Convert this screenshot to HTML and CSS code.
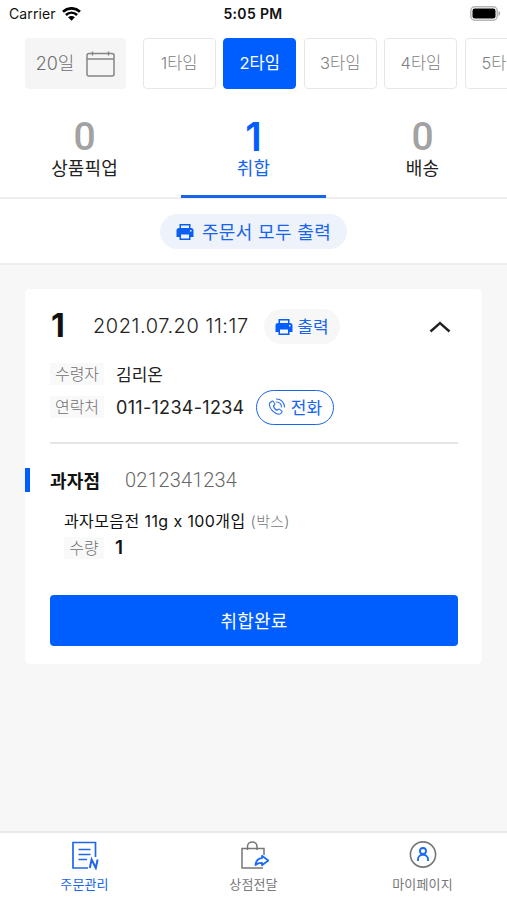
FILE: index.html
```html
<!DOCTYPE html>
<html lang="ko">
<head>
<meta charset="utf-8">
<meta name="viewport" content="width=device-width">
<title>주문관리</title>
<link rel="stylesheet" href="styles.css">
</head>
<body>
<div class="app">
  <header class="status">
    <div class="carrier"><span>Carrier</span>
      <svg width="19" height="14" viewBox="0 0 19 14" fill="none" stroke="#000" stroke-width="2.7"><path d="M1 4.700c5-4.500 12-4.500 17 0M3.900 8c3.300-3 7.900-3 11.200 0"/><path d="M6.100 10.200 9.500 13.800l3.400-3.600c-1.900-1.700-4.900-1.700-6.800 0z" fill="#000" stroke="none"/></svg>
    </div>
    <div class="clock">5:05 PM</div>
    <svg class="battery" width="31" height="15" viewBox="0 0 31 15"><rect x=".8" y=".8" width="26.400" height="13.400" rx="4" fill="#fff" stroke="#b5b5b5" stroke-width="1.500"/><rect x="2.500" y="2.500" width="23" height="10" rx="2.300"/><path d="M28.500 5v5c2.300-1 2.300-4 0-5z" fill="#aaa"/></svg>
  </header>

  <div class="times">
    <button class="date"><span>20일</span>
      <svg width="29" height="26" viewBox="0 0 29 26" fill="none" stroke="#858585" stroke-width="1.500"><rect x="1" y="2.500" width="27" height="22.500" rx="2"/><path d="M1 8h27M6.500 .5v4M22.500 .5v4"/></svg>
    </button>
    <button class="time"><span>1타임</span></button>
    <button class="time on"><span>2타임</span></button>
    <button class="time"><span>3타임</span></button>
    <button class="time"><span>4타임</span></button>
    <button class="time"><span>5타임</span></button>
  </div>

  <nav class="steps">
    <div class="step"><b>0</b><span>상품픽업</span></div>
    <div class="step on"><b>1</b><span>취합</span></div>
    <div class="step"><b>0</b><span>배송</span></div>
  </nav>

  <div class="printbar">
    <button class="printall">
      <svg class="printer" width="18" height="18" viewBox="0 0 18 18"><path fill="#0a5ff0" fill-rule="evenodd" d="M3.500 1h11v4h-11zM5 2.500v2.500h8V2.500zM3 5h12q2.500 0 2.500 2.500V14h-3v3h-11v-3h-3V7.500Q.5 5 3 5zM5 11.500v4h8v-4zM14 7v1.500h1.500V7z"/></svg>
      <span>주문서 모두 출력</span>
    </button>
  </div>

  <main class="content">
    <section class="card">
      <div class="head">
        <b class="no">1</b>
        <span class="when">2021.07.20 11:17</span>
        <button class="print">
          <svg class="printer" width="18" height="18" viewBox="0 0 18 18"><path fill="#005eff" fill-rule="evenodd" d="M3.500 1h11v4h-11zM5 2.500v2.500h8V2.500zM3 5h12q2.500 0 2.500 2.500V14h-3v3h-11v-3h-3V7.500Q.5 5 3 5zM5 11.500v4h8v-4zM14 7v1.500h1.500V7z"/></svg>
          <span>출력</span>
        </button>
        <svg class="chevron" width="22" height="13" viewBox="0 0 22 13" fill="none" stroke="#222" stroke-width="2.400"><path d="M1.500 11.500 11 3l9.500 8.500"/></svg>
      </div>
      <div class="row person"><span class="tag"><span>수령자</span></span><span class="value name">김리온</span></div>
      <div class="row contact"><span class="tag"><span>연락처</span></span><span class="value phone">011-1234-1234</span>
        <button class="call">
          <svg width="18" height="18" viewBox="0 0 18 18" fill="none" stroke="#2a6eea" stroke-width="1.100" stroke-linecap="round" stroke-linejoin="round"><path d="M2.300 4.500 4 3.200q.8-.4 1.300.3l1.500 2.200q.4.700-.3 1.300l-1 .8c.3 2 1.800 3.800 3.700 4.400l1.200-.9q.7-.5 1.300 0l2 1.600q.7.600.1 1.400l-1.200 1.400q-.6.600-1.500.5C6 15.700 1.800 11.200 1.300 6.500q0-1.200 1-2z"/><path d="M8.500 1c4.500 0 8 3.500 8 8M8.500 4c3 0 5 2 5 5"/></svg>
          <span>전화</span>
        </button>
      </div>
      <div class="shop"><b>과자점</b><span>0212341234</span></div>
      <div class="item"><span class="product">과자모음전 11g x 100개입</span><span class="unit">(박스)</span></div>
      <div class="qty"><span class="tag"><span>수량</span></span><b>1</b></div>
      <button class="done"><span>취합완료</span></button>
    </section>
  </main>

  <nav class="bottom">
    <a class="on">
      <svg width="30" height="30" viewBox="0 0 30 30" fill="none" stroke="#1e67e8" stroke-width="1.700"><path d="M18 28H3V2.500H25.500V17M8.500 9.500H20.500M8.500 14.500H20.500M8.500 19.500h8.500"/><path d="m19.800 28 1.800-8.500 4.200 8.500 1.800-8.500" stroke-width="2"/></svg>
      <span>주문관리</span>
    </a>
    <a>
      <svg width="30" height="30" viewBox="0 0 30 30" fill="none" stroke="#777" stroke-width="1.500"><path d="M25 15V8.500H3V28h21M8.500 10V6.500c0-6 9.500-6 9.500 0V10"/><path stroke="#1e6cf5" stroke-width="1.800" stroke-linejoin="round" d="M16.500 25c.5-4.500 3-6.700 6.500-6.900v-2.300l6.300 4.700-6.300 4.700v-2.400c-2.500-.1-4.500.3-6.500 2.200z"/></svg>
      <span>상점전달</span>
    </a>
    <a>
      <svg width="30" height="30" viewBox="0 0 30 30" fill="none" stroke="#777" stroke-width="1.600"><circle cx="15" cy="14.500" r="12.600"/><g stroke="#1e6cf5" stroke-width="1.900"><circle cx="15" cy="11" r="3"/><path d="M10 21v-1.700c0-6 10-6 10 0V21"/></g></svg>
      <span>마이페이지</span>
    </a>
  </nav>
</div>
</body>
</html>
```
FILE: styles.css
```css
* { box-sizing: border-box; }
body { margin: 0; background: #fff; }
body, button { font-family: Inter, "Noto Sans CJK KR", sans-serif; }
button { border: 0; padding: 0; margin: 0; flex: none; display: flex; align-items: center; justify-content: center; white-space: nowrap; }
button span, .tag span { padding-bottom: 2px; }
svg { display: block; flex: none; }
.app { width: 507px; height: 900px; overflow: hidden; display: flex; flex-direction: column; color: #222; white-space: nowrap; }

.status { height: 27px; flex: none; display: grid; grid-template-columns: 1fr auto 1fr; align-items: center; padding: 0 6px 0 9px; color: #111; }
.carrier { display: flex; align-items: center; gap: 6px; font-size: 14px; letter-spacing: .1px; }
.clock { font-size: 14px; font-weight: 600; letter-spacing: .35px; padding-right: 4px; }
.battery { justify-self: end; }

.times { height: 62px; flex: none; display: flex; gap: 7.600px; padding: 11px 0 0 25px; overflow: hidden; }
.date { width: 101px; height: 51px; margin-right: 9px; gap: 12px; background: #f5f5f5; border-radius: 4px; font-size: 18px; font-weight: 300; color: #707070; }
.date span { padding-bottom: 4px; }
.time { width: 73px; height: 51px; background: #fff; border: 1.500px solid #e7e7e7; border-radius: 4px; font-size: 16.500px; color: #808080; font-weight: 300; }
.time span { padding-bottom: 4px; }
.time.on { background: #005eff; border-color: #005eff; color: #fff; font-weight: 400; }

.steps { height: 110px; flex: none; display: flex; justify-content: space-between; border-bottom: 2px solid #eee; }
.step { width: 169px; display: flex; flex-direction: column; align-items: center; padding-top: 28px; }
.step b { font: 500 39px/40px Roboto, sans-serif; color: #a2a2a2; }
.step span { font-size: 18px; line-height: 24px; letter-spacing: .1px; }
.step.on { width: 145px; height: 109px; border-bottom: 3px solid #1765ea; }
.step.on b { font-family: Inter, sans-serif; font-weight: 600; color: #005eff; }
.step.on span { color: #1765ea; }

.printbar { height: 66px; flex: none; display: flex; align-items: center; justify-content: center; border-bottom: 2px solid #eee; }
.printall { width: 187px; height: 35px; margin-top: 1px; border-radius: 18px; background: #eef2fa; gap: 8px; font-size: 18px; color: #1765ea; letter-spacing: .35px; }

.content { flex: 1; background: #f7f7f7; padding: 24px 25px 0; }
.card { height: 375px; background: #fff; border-radius: 5px; padding: 18px 24px 0 25px; display: flex; flex-direction: column; }
.head { height: 39px; display: flex; align-items: center; }
.no { width: 43px; padding: 0 0 2px 1px; font-size: 32px; font-weight: 700; color: #111; }
.when { width: 171px; padding-bottom: 1px; font-size: 20px; font-weight: 300; letter-spacing: .55px; }
.print { width: 76px; height: 35px; border-radius: 18px; background: #f7f7f7; color: #1765ea; gap: 4px; font-size: 17px; }
.chevron { margin-left: auto; margin-right: 7px; }
.row { display: flex; align-items: center; }
.person { height: 30px; margin-top: 13px; }
.contact { height: 36px; }
.tag { width: 54px; height: 22px; display: flex; align-items: center; justify-content: center; background: #f9f9f9; color: #707070; font-size: 16px; font-weight: 300; }
.value { margin-left: 12px; font-size: 17px; }
.name { padding-bottom: 2px; }
.phone { width: 140px; font-size: 18px; letter-spacing: .3px; }
.call { width: 78px; height: 35px; border: 1.700px solid #1765ea; border-radius: 18px; background: #fff; color: #1765ea; font-size: 17px; gap: 5px; }
.shop { height: 76px; margin: 17px 0 0 -25px; position: relative; display: flex; align-items: center; padding-left: 25px; }
.shop::before { content: ""; position: absolute; left: 25px; right: 0; top: 0; height: 2px; background: #e6e6e6; }
.shop::after { content: ""; position: absolute; left: 0; top: 26px; width: 5px; height: 24px; background: #005eff; }
.shop b { width: 75px; font-size: 18px; font-weight: 700; color: #111; letter-spacing: .2px; }
.shop span { font: 300 20px Roboto, sans-serif; color: #666; letter-spacing: .1px; }
.item { height: 26px; margin-left: 14px; margin-top: -11px; display: flex; align-items: center; gap: 5px; color: #111; font-size: 16px; letter-spacing: .4px; }
.unit { color: #777; font-size: 15px; font-weight: 300; letter-spacing: .3px; }
.qty { display: flex; align-items: center; height: 25px; margin-left: 14px; margin-top: 2px; }
.qty .tag { width: 40px; }
.qty b { margin-left: 11px; padding-bottom: 1px; font-size: 19px; font-weight: 600; color: #111; }
.done { height: 51px; margin-top: 35px; border-radius: 4px; background: #005eff; color: #fff; font-size: 18px; letter-spacing: .2px; }

.bottom { height: 69px; flex: none; display: flex; border-top: 2px solid #e9e9e9; background: #fff; }
.bottom a { width: 169px; display: flex; flex-direction: column; align-items: center; padding-top: 7px; font-size: 13px; color: #777; }
.bottom span { line-height: 20px; margin-top: 4px; letter-spacing: .15px; }
.bottom .on { color: #1765ea; }
```
